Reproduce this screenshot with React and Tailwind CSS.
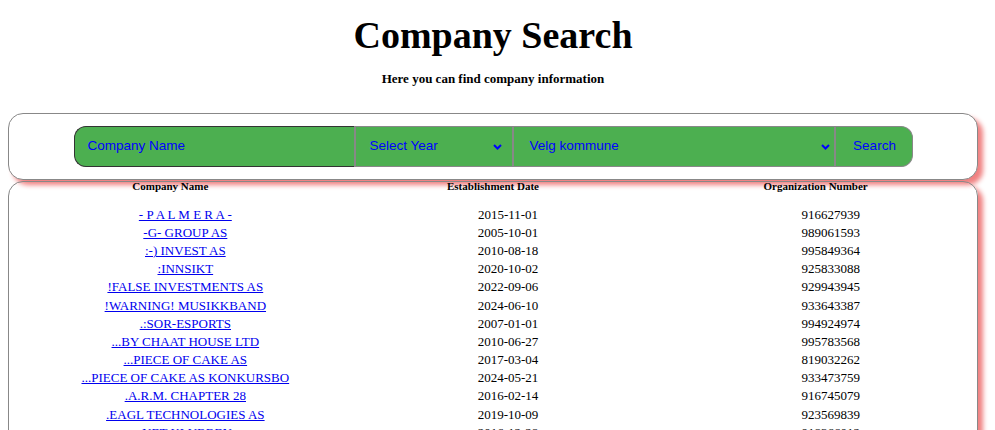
import React from "react";

// --- Data ---

const companies = [
  { name: "- P A L M E R A -", date: "2015-11-01", org: "916627939" },
  { name: "-G- GROUP AS", date: "2005-10-01", org: "989061593" },
  { name: ":-) INVEST AS", date: "2010-08-18", org: "995849364" },
  { name: ":INNSIKT", date: "2020-10-02", org: "925833088" },
  { name: "!FALSE INVESTMENTS AS", date: "2022-09-06", org: "929943945" },
  { name: "!WARNING! MUSIKKBAND", date: "2024-06-10", org: "933643387" },
  { name: ".:SOR-ESPORTS", date: "2007-01-01", org: "994924974" },
  { name: "...BY CHAAT HOUSE LTD", date: "2010-06-27", org: "995783568" },
  { name: "...PIECE OF CAKE AS", date: "2017-03-04", org: "819032262" },
  { name: "...PIECE OF CAKE AS KONKURSBO", date: "2024-05-21", org: "933473759" },
  { name: ".A.R.M. CHAPTER 28", date: "2016-02-14", org: "916745079" },
  { name: ".EAGL TECHNOLOGIES AS", date: "2019-10-09", org: "923569839" },
  { name: ".NET KLUBBEN", date: "2016-12-28", org: "918366012" },
];

const Chevron = () => (
  <svg width="9" height="6" viewBox="0 0 9 6" className="shrink-0">
    <path d="M1 1 L4.5 4.5 L8 1" fill="none" stroke="#0000ff" strokeWidth="2" />
  </svg>
);

const App = () => {
  return (
    <div className="h-[430px] overflow-hidden bg-white pl-2 pr-[17px] font-['Liberation_Serif',serif] text-black">
      {/* Header */}
      <h1 className="mt-[14px] text-center text-[38px] font-bold leading-[42px]">Company Search</h1>
      <h5 className="mt-[15px] text-center text-[13px] font-bold leading-[15px]">
        Here you can find company information
      </h5>

      {/* Search card */}
      <div className="mt-[27px] flex justify-center rounded-[15px] border border-[#888] bg-white py-3 shadow-[5px_5px_5px_#f08080]">
        <div className="flex h-[41px] w-[839px] font-['Liberation_Sans',sans-serif] text-[13.5px] text-[#0000ff]">
          <div className="flex w-[280px] items-center rounded-l-xl border border-r-0 border-[#333] bg-[#4caf50] pl-[13px]">
            Company Name
          </div>
          <div className="flex w-[160px] items-center justify-between border-2 border-y-[1px] border-[#888] bg-[#4caf50] pl-[14px] pr-[10px]">
            <span>Select Year</span>
            <Chevron />
          </div>
          <div className="flex w-[320px] items-center justify-between border-y border-[#888] bg-[#4caf50] pl-[16px] pr-[4px]">
            <span>Velg kommune</span>
            <Chevron />
          </div>
          <div className="flex w-[79px] items-center justify-center rounded-r-xl border-2 border-y-[1px] border-r-[1px] border-[#888] bg-[#4caf50] pl-[2px]">
            Search
          </div>
        </div>
      </div>

      {/* Results card */}
      <div className="mt-px h-[300px] overflow-hidden rounded-t-[15px] border border-[#888] shadow-[5px_5px_5px_#f08080]">
        <div className="-mt-[2px] grid grid-cols-3 text-center text-[11px] font-bold leading-[12px]">
          <div>Company Name</div>
          <div>Establishment Date</div>
          <div>Organization Number</div>
        </div>
        <div className="mr-[-15px] ml-[15px] mt-[13px] text-[13px]">
          {companies.map((c) => (
            <div key={c.org} className="grid h-[18.2px] grid-cols-3 items-center text-center leading-[15px]">
              <div>
                <a href="#" className="text-[#0000ee] underline">{c.name}</a>
              </div>
              <div>{c.date}</div>
              <div>{c.org}</div>
            </div>
          ))}
        </div>
      </div>
    </div>
  );
};

export default App;
